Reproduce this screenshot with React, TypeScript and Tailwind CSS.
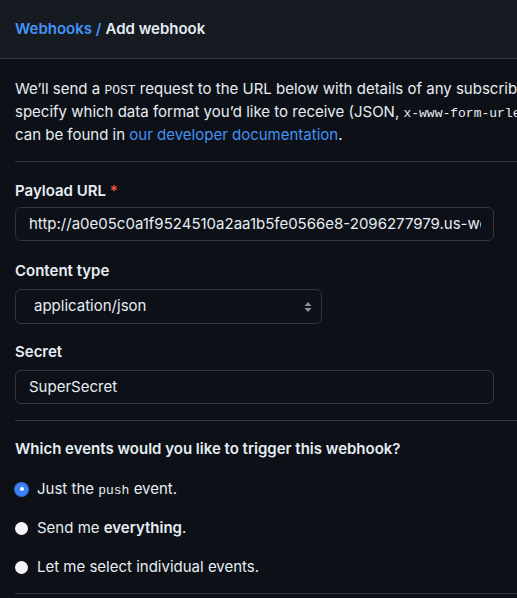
import React from "react";

function Radio({ checked }: { checked?: boolean }) {
  if (checked) {
    return (
      <span className="w-[13px] h-[13px] rounded-full bg-[#3a82f6] flex items-center justify-center shrink-0 shadow-[0_0_0_1px_#2f6fd8]">
        <span className="w-[4px] h-[4px] rounded-full bg-white" />
      </span>
    );
  }
  return <span className="w-[13px] h-[13px] rounded-full bg-[#f5f5f5] shrink-0" />;
}

export default function App() {
  const mono = "font-['Liberation_Mono','DejaVu_Sans_Mono',monospace] leading-[1]";
  return (
    <div className="w-[517px] h-[598px] bg-[#0d1117] overflow-hidden text-[#e6edf3] font-['Inter','Noto_Sans',sans-serif]">
      <div className="h-[59px] bg-[#161b22] border-b border-[#30363d] px-[15px] flex items-center text-[15px] font-semibold">
        <span className="text-[#4493f8]">Webhooks /</span>
        <span className="ml-[4px] text-[#e6edf3]">Add webhook</span>
      </div>
      <div className="pl-[15px]">
        <div className="pt-[18px] text-[15px] leading-[23px] whitespace-nowrap text-[#e6edf3]">
          <div className="h-[23px]">
            We’ll send a <span className={`${mono} text-[13px]`}>POST</span> request to the URL below with details of any subscribed events. You can also
          </div>
          <div className="h-[23px]">
            specify which data format you’d like to receive (JSON, <span className={`${mono} text-[13px]`}>x-www-form-urlencoded</span>, etc). More information
          </div>
          <div className="h-[23px]">
            can be found in <span className="text-[#4493f8]">our developer documentation</span>.
          </div>
        </div>
        <div className="mt-[15px] border-t border-[#30363d]" />

        <div className="mt-[19px] text-[15px] leading-[20px] font-semibold">
          Payload URL <span className="text-[#f85149]">*</span>
        </div>
        <div className="mt-[6px] w-[479px] h-[34px] rounded-[6px] border border-[#30363d] bg-[#0d1117] pl-[13px] pr-[12px] flex items-center overflow-hidden">
          <span className="text-[15px] whitespace-nowrap overflow-hidden block w-full text-[#e6edf3]">
            http://a0e05c0a1f9524510a2aa1b5fe0566e8-2096277979.us-west-2.elb.amazonaws.com
          </span>
        </div>

        <div className="mt-[20px] text-[15px] leading-[20px] font-semibold">Content type</div>
        <div className="mt-[8px] w-[307px] h-[35px] rounded-[6px] border border-[#30363d] bg-[#0d1117] pl-[18px] pr-[8px] flex items-center justify-between">
          <span className="text-[15px] text-[#e6edf3]">application/json</span>
          <svg width="8" height="12" viewBox="0 0 8 12" className="mr-[1px]">
            <path d="M4 1 L7.5 5 L0.5 5 Z" fill="#8b949e" />
            <path d="M4 11 L7.5 7 L0.5 7 Z" fill="#8b949e" />
          </svg>
        </div>

        <div className="mt-[18px] text-[15px] leading-[20px] font-semibold">Secret</div>
        <div className="mt-[8px] w-[479px] h-[34px] rounded-[6px] border border-[#30363d] bg-[#0d1117] pl-[13px] flex items-center">
          <span className="text-[15px] text-[#e6edf3]">SuperSecret</span>
        </div>

        <div className="mt-[16px] border-t border-[#30363d]" />

        <div className="mt-[18px] text-[15px] leading-[20px] font-semibold">
          Which events would you like to trigger this webhook?
        </div>

        <div className="mt-[20px] flex items-center gap-[9px] h-[20px] text-[15px]">
          <Radio checked />
          <span>
            Just the <span className={`${mono} text-[13px]`}>push</span> event.
          </span>
        </div>
        <div className="mt-[19px] flex items-center gap-[9px] h-[20px] text-[15px]">
          <Radio />
          <span>
            Send me <span className="font-semibold">everything</span>.
          </span>
        </div>
        <div className="mt-[19px] flex items-center gap-[9px] h-[20px] text-[15px]">
          <Radio />
          <span>Let me select individual events.</span>
        </div>

        <div className="mt-[16px] border-t border-[#30363d]" />
      </div>
    </div>
  );
}
